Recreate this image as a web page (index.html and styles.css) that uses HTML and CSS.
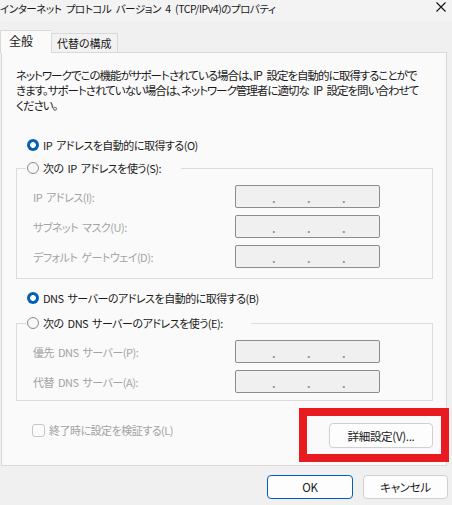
FILE: index.html
```html
<!DOCTYPE html>
<html lang="ja">
<head>
<meta charset="utf-8">
<title>インターネット プロトコル バージョン 4 (TCP/IPv4)のプロパティ</title>
<link rel="stylesheet" href="styles.css">
</head>
<body>
<div class="dialog">
  <div class="titlebar">
    <span class="title">インターネット プロトコル バージョン 4 (TCP/IPv4)のプロパティ</span>
    <svg class="close" width="10" height="10" viewBox="0 0 10 10"><path d="M0.5 0.5 L9.5 9.5 M9.5 0.5 L0.5 9.5" stroke="#111" stroke-width="1.1" fill="none"/></svg>
  </div>
  <div class="tabs">
    <div class="tab active">全般</div>
    <div class="tab">代替の構成</div>
  </div>
  <div class="panel">
    <p class="intro">ネットワークでこの機能がサポートされている場合は、IP 設定を自動的に取得することがで<br>きます。サポートされていない場合は、ネットワーク管理者に適切な IP 設定を問い合わせて<br>ください。</p>

    <div class="opt first"><span class="radio on"></span><span>IP アドレスを自動的に取得する(O)</span></div>
    <div class="group g1">
      <div class="legend"><span class="radio"></span><span>次の IP アドレスを使う(S):</span></div>
      <div class="field"><span class="lbl">IP アドレス(I):</span><span class="ip"><i>.</i><i>.</i><i>.</i></span></div>
      <div class="field"><span class="lbl">サブネット マスク(U):</span><span class="ip"><i>.</i><i>.</i><i>.</i></span></div>
      <div class="field"><span class="lbl">デフォルト ゲートウェイ(D):</span><span class="ip"><i>.</i><i>.</i><i>.</i></span></div>
    </div>

    <div class="opt dns"><span class="radio on"></span><span>DNS サーバーのアドレスを自動的に取得する(B)</span></div>
    <div class="group g2">
      <div class="legend"><span class="radio"></span><span>次の DNS サーバーのアドレスを使う(E):</span></div>
      <div class="field"><span class="lbl">優先 DNS サーバー(P):</span><span class="ip"><i>.</i><i>.</i><i>.</i></span></div>
      <div class="field"><span class="lbl">代替 DNS サーバー(A):</span><span class="ip"><i>.</i><i>.</i><i>.</i></span></div>
    </div>

    <div class="footer">
      <div class="check"><span class="box"></span><span>終了時に設定を検証する(L)</span></div>
      <button class="btn adv">詳細設定(V)...</button>
    </div>
    <div class="highlight"></div>
  </div>
  <div class="actions">
    <button class="btn ok">OK</button>
    <button class="btn">キャンセル</button>
  </div>
</div>
</body>
</html>
```
FILE: styles.css
```css
html, body {
  margin: 0;
  padding: 0;
}
body {
  width: 452px;
  height: 505px;
  overflow: hidden;
  background: #f0f0f0;
  font-family: "Noto Sans CJK JP", "Noto Sans", sans-serif;
  font-feature-settings: "palt";
  font-size: 11px;
  letter-spacing: -0.5px;
  word-spacing: 2px;
  color: #1a1a1a;
}
.dialog {
  position: relative;
}
.titlebar {
  height: 21px;
  background: #f3f3f3;
  display: flex;
  justify-content: space-between;
  align-items: flex-start;
}
.title {
  font-size: 10.5px;
  line-height: 18px;
  white-space: nowrap;
  letter-spacing: -0.45px;
  word-spacing: 2.5px;
  color: #1a1a1a;
}
.close {
  margin-top: 2px;
  margin-right: 6px;
  flex: none;
}
.tabs {
  display: flex;
  align-items: flex-end;
  height: 31px;
  position: relative;
  z-index: 1;
}
.tab {
  box-sizing: border-box;
  width: 67px;
  height: 19px;
  padding: 0 0 0 5px;
  line-height: 18px;
  border: 1px solid #d9d9d9;
  border-bottom: none;
  background: #f2f2f2;
  color: #1a1a1a;
  font-size: 11px;
  letter-spacing: 0;
  white-space: nowrap;
}
.tab.active {
  height: 23px;
  width: 51px;
  padding: 0 0 0 8px;
  line-height: 20px;
  background: #fafafa;
  margin-bottom: -1px;
  border-right: none;
  font-size: 12px;
}
.panel {
  position: relative;
  box-sizing: border-box;
  margin-left: 1px;
  width: 446px;
  height: 414px;
  background: #fafafa;
  border: 1px solid #d9d9d9;
  padding: 15px 13px 0 14px;
}
.intro {
  margin: 0;
  font-size: 11.5px;
  line-height: 15px;
  white-space: nowrap;
  letter-spacing: -1px;
  word-spacing: 3px;
  color: #1a1a1a;
}
.opt, .legend {
  display: flex;
  align-items: center;
  gap: 4px;
  height: 20px;
  color: #1a1a1a;
  white-space: nowrap;
}
.opt {
  padding-left: 11px;
}
.opt.first {
  margin-top: 22px;
}
.opt.dns {
  margin-top: 9px;
}
.radio {
  box-sizing: border-box;
  width: 12px;
  height: 12px;
  border-radius: 50%;
  border: 1px solid #8a8a8a;
  background: #f7f7f7;
  flex: none;
}
.radio.on {
  border: none;
  background: radial-gradient(circle, #ffffff 0 2.6px, #005fb8 3.2px);
}
.group {
  border: 1px solid #dcdcdc;
}
.g1 {
  margin-top: 13px;
  padding-bottom: 10px;
}
.g2 {
  margin-top: 15px;
  padding-bottom: 7px;
}
.legend {
  width: fit-content;
  margin-top: -11px;
  margin-left: 9px;
  padding: 0 20px 0 1px;
  background: #fafafa;
}
.g2 .legend {
  padding-right: 28px;
}
.field {
  display: flex;
  align-items: center;
  height: 23px;
  margin-top: 7px;
  padding-left: 16px;
  white-space: nowrap;
}
.lbl {
  width: 202px;
  color: #a3a3a3;
  flex: none;
}
.ip {
  box-sizing: border-box;
  width: 145px;
  height: 23px;
  border: 1px solid #8c8c8c;
  border-radius: 2px;
  background: #f0f0f0;
  display: flex;
  padding-left: 36px;
  color: #7f8fa6;
  line-height: 25px;
}
.ip i {
  font-style: normal;
  width: 35px;
  font-size: 11px;
  font-weight: bold;
}
.footer {
  display: flex;
  justify-content: space-between;
  align-items: flex-start;
  margin-top: 19px;
}
.check {
  display: flex;
  align-items: center;
  gap: 4px;
  height: 20px;
  margin-left: 16px;
  color: #a3a3a3;
  white-space: nowrap;
}
.box {
  box-sizing: border-box;
  width: 13px;
  height: 13px;
  border: 1px solid #c6c6c6;
  border-radius: 3px;
  background: #fbfbfb;
}
.btn {
  box-sizing: border-box;
  font-family: inherit;
  font-feature-settings: "palt";
  font-size: 11.5px;
  letter-spacing: -0.3px;
  color: #1a1a1a;
  background: #fdfdfd;
  border: 1px solid #d0d0d0;
  border-radius: 4px;
  height: 24px;
  padding: 0;
  line-height: 20px;
}
.adv {
  width: 104px;
  height: 25px;
  margin-top: 3px;
}
.highlight {
  position: absolute;
  left: 297px;
  top: 355px;
  width: 150px;
  height: 54px;
  box-sizing: border-box;
  border: 8px solid #e81c20;
}
.actions {
  display: flex;
  justify-content: flex-end;
  gap: 10px;
  margin-top: 9px;
  padding-right: 4px;
}
.actions .btn {
  width: 85px;
}
.actions .ok {
  width: 86px;
  border-color: #005fb8;
}
```
